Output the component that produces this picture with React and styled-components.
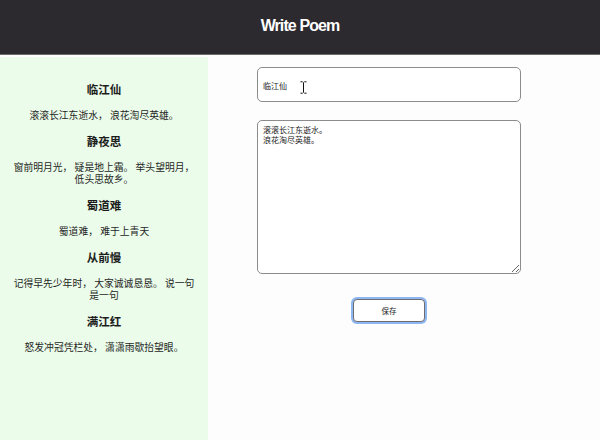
import React from 'react';
import styled, { createGlobalStyle } from 'styled-components';

const poems = [
  { title: '临江仙', body: '滚滚长江东逝水， 浪花淘尽英雄。' },
  { title: '静夜思', body: '窗前明月光， 疑是地上霜。 举头望明月， 低头思故乡。' },
  { title: '蜀道难', body: '蜀道难， 难于上青天' },
  { title: '从前慢', body: '记得早先少年时， 大家诚诚恳恳。 说一句是一句' },
  { title: '满江红', body: '怒发冲冠凭栏处， 潇潇雨歇抬望眼。' },
];

const App = () => {
  return (
    <>
      <GlobalStyle />
      <Page>
        <Header>
          <h1>Write Poem</h1>
        </Header>
        <Body>
          <Sidebar>
            {poems.map((poem) => (
              <React.Fragment key={poem.title}>
                <PoemTitle>{poem.title}</PoemTitle>
                <PoemText>{poem.body}</PoemText>
              </React.Fragment>
            ))}
          </Sidebar>
          <Main>
            <Form>
              <InputWrap>
                <TitleInput defaultValue="临江仙" />
                <Cursor width="7" height="13" viewBox="0 0 7 13">
                  <path d="M0.5 0.8h2.2M4.3 0.8h2.2M3.5 1.3v10.4M0.5 12.2h2.2M4.3 12.2h2.2" stroke="#fff" strokeWidth="2.2" fill="none" />
                  <path d="M0.5 0.8h2.2M4.3 0.8h2.2M3.5 1.3v10.4M0.5 12.2h2.2M4.3 12.2h2.2" stroke="#111" strokeWidth="1" fill="none" />
                </Cursor>
              </InputWrap>
              <ContentArea defaultValue={'滚滚长江东逝水。\n浪花淘尽英雄。'} />
              <SaveButton>保存</SaveButton>
            </Form>
          </Main>
        </Body>
      </Page>
    </>
  );
};

const GlobalStyle = createGlobalStyle`
  html, body {
    margin: 0;
    padding: 0;
    height: 100%;
  }
  body {
    font-family: "Noto Sans CJK SC", "Liberation Sans", sans-serif;
    color: #222;
    background: #fdfdfe;
  }
`;

const Page = styled.div`
  width: 600px;
  height: 440px;
  display: flex;
  flex-direction: column;
  overflow: hidden;
`;

const Header = styled.header`
  height: 54px;
  flex: none;
  background: #2c2a2e;
  border-bottom: 1px solid #6b6b6b;
  display: flex;
  align-items: center;
  justify-content: center;
  h1 {
    margin: 0;
    font-family: "Liberation Sans", Arial, sans-serif;
    font-size: 16px;
    letter-spacing: -0.9px;
    font-weight: 700;
    color: #fff;
    padding-bottom: 3px;
  }
`;

const Body = styled.div`
  flex: 1;
  display: flex;
  padding-top: 2px;
  min-height: 0;
`;

const Sidebar = styled.aside`
  width: 208px;
  flex: none;
  box-sizing: border-box;
  background: #ebfdea;
  padding: 25px 13px 0;
  display: flex;
  flex-direction: column;
  gap: 13px;
  text-align: center;
`;

const PoemTitle = styled.h3`
  margin: 0;
  font-size: 11.5px;
  line-height: 14px;
  font-weight: 700;
  color: #1c1c1c;
`;

const PoemText = styled.p`
  margin: 0;
  font-size: 9.8px;
  line-height: 12px;
  color: #262626;
`;

const Main = styled.main`
  flex: 1;
  display: flex;
  justify-content: center;
  padding: 10px 30px 0 0;
`;

const Form = styled.div`
  width: 264px;
  display: flex;
  flex-direction: column;
  align-items: center;
`;

const InputWrap = styled.div`
  position: relative;
  width: 100%;
`;

const fieldStyles = `
  width: 100%;
  box-sizing: border-box;
  border: 1px solid #8c8c8c;
  border-radius: 5px;
  background: #fff;
  font-family: "Noto Sans CJK SC", sans-serif;
  font-size: 8px;
  color: #222;
  outline: none;
  padding-left: 5px;
`;

const TitleInput = styled.input`
  ${fieldStyles}
  display: block;
  height: 35px;
  padding-top: 2px;
`;

const Cursor = styled.svg`
  position: absolute;
  left: 43px;
  top: 14px;
`;

const ContentArea = styled.textarea`
  ${fieldStyles}
  display: block;
  margin-top: 18px;
  height: 154px;
  line-height: 10px;
  padding-top: 4px;
  resize: vertical;
`;

const SaveButton = styled.button`
  margin-top: 25px;
  width: 72px;
  height: 23px;
  box-sizing: border-box;
  border: 1px solid #6e6e6e;
  border-radius: 4px;
  background: #fff;
  box-shadow: 0 0 0 2px #8db6f2;
  font-family: "Noto Sans CJK SC", sans-serif;
  font-size: 7.5px;
  color: #222;
  padding: 0;
`;

export default App;
